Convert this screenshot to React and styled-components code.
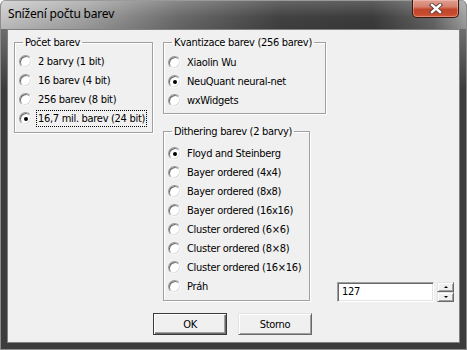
import React from 'react';
import styled, { createGlobalStyle } from 'styled-components';

const Global = createGlobalStyle`
  html, body { margin: 0; padding: 0; background: #ffffff; }
  body { width: 467px; height: 350px; overflow: hidden; }
`;

const uiFont = `"DejaVu Sans Condensed", "DejaVu Sans", sans-serif`;

const Window = styled.div`
  width: 467px;
  height: 350px;
  box-sizing: border-box;
  display: flex;
  flex-direction: column;
  background: #3c3c3c;
  border: 1px solid #8c8c8c;
  border-top: none;
  border-radius: 6px 6px 0 0;
  overflow: hidden;
`;

const TitleBar = styled.div`
  height: 29px;
  flex: none;
  display: flex;
  align-items: flex-start;
  justify-content: space-between;
  background:
    linear-gradient(to bottom, rgba(255,255,255,0.18), rgba(0,0,0,0.05) 60%, rgba(0,0,0,0.12)),
    linear-gradient(to right, #cfcfcf 0%, #a9a9a9 18%, #707070 38%, #454545 60%, #3e3e3e 80%, #6a6a6a 93%, #a8a8a8 100%);
  box-shadow: inset 0 1px 0 #9a9a9a;
`;

const Title = styled.div`
  font-family: "Noto Sans", "Open Sans", sans-serif;
  font-size: 12px;
  color: #000;
  padding: 6px 0 0 7px;
  line-height: 16px;
  letter-spacing: -0.2px;
`;

const CloseButton = styled.div`
  width: 47px;
  height: 18px;
  margin-right: 7px;
  box-sizing: border-box;
  border: 1px solid #3b1610;
  border-top: none;
  border-radius: 0 0 5px 5px;
  background: linear-gradient(to bottom, #dfa092 0%, #d5806c 40%, #c2462c 55%, #c54a2e 80%, #d25b38 100%);
  box-shadow: inset 0 0 0 1px rgba(255, 210, 200, 0.4);
  display: flex;
  align-items: center;
  justify-content: center;
`;

const Body = styled.div`
  flex: 1;
  display: flex;
  padding: 0 6px 6px 6px;
  background: linear-gradient(to bottom, #6e6e6e 0px, #3c3c3c 60px);
`;

const Client = styled.div`
  flex: 1;
  min-width: 0;
  border: 1px solid #808080;
  background: #f0f0f0;
  display: flex;
  flex-direction: column;
  padding: 6px 0 0 6px;
  font-family: ${uiFont};
  font-size: 11px;
  letter-spacing: -0.3px;
  color: #000;
`;

const Columns = styled.div`
  display: flex;
  align-items: flex-start;
`;

const MidColumn = styled.div`
  display: flex;
  flex-direction: column;
  gap: 11px;
  margin-left: 10px;
`;

const Group = styled.fieldset`
  margin: 0;
  box-sizing: border-box;
  width: ${p => p.$w}px;
  height: ${p => p.$h}px;
  padding: ${p => p.$pt}px 0 0 3px;
  border: 1px solid #a0a0a0;
  box-shadow: 1px 1px 0 #ffffff, inset 1px 1px 0 #ffffff;
  display: flex;
  flex-direction: column;
`;

const Legend = styled.legend`
  padding: 0 2px;
  margin-left: 5px;
  line-height: 13px;
  font-size: 11px;
`;

const RadioRow = styled.div`
  height: 19px;
  display: flex;
  align-items: center;
  gap: 5px;
  padding-left: 1px;
  white-space: nowrap;
`;

const RadioCircle = styled.span`
  width: 13px;
  height: 13px;
  flex: none;
  box-sizing: border-box;
  border-radius: 50%;
  border: 1px solid;
  border-color: #9a9a9a #f8f8f8 #f8f8f8 #9a9a9a;
  box-shadow: inset 1px 1px 0 #6a6a6a, inset -1px -1px 0 #dcdcdc;
  background: #ffffff;
  display: flex;
  align-items: center;
  justify-content: center;
  &::after {
    content: '';
    width: 4px;
    height: 4px;
    border-radius: 50%;
    background: ${p => (p.$checked ? '#000' : 'transparent')};
  }
`;

const RadioLabel = styled.span`
  padding: 1px 1px;
  line-height: 13px;
  outline: ${p => (p.$focus ? '1px dotted #000' : 'none')};
  outline-offset: 0;
`;

const SpinColumn = styled.div`
  align-self: flex-end;
  margin-left: 11px;
  display: flex;
  gap: 3px;
  margin-bottom: -1px;
`;

const SpinEdit = styled.div`
  width: 97px;
  height: 20px;
  box-sizing: border-box;
  background: #fff;
  border: 1px solid;
  border-color: #a0a0a0 #ffffff #ffffff #a0a0a0;
  box-shadow: inset 1px 1px 0 #696969, inset -1px -1px 0 #e3e3e3;
  padding: 0 0 0 4px;
  line-height: 18px;
  font-size: 11px;
`;

const SpinButtons = styled.div`
  display: flex;
  flex-direction: column;
`;

const SpinBtn = styled.div`
  width: 17px;
  height: 10px;
  box-sizing: border-box;
  background: #f0f0f0;
  border: 1px solid;
  border-color: #e3e3e3 #696969 #696969 #e3e3e3;
  box-shadow: inset 1px 1px 0 #ffffff, inset -1px -1px 0 #a0a0a0;
  display: flex;
  align-items: center;
  justify-content: center;
  &::after {
    content: '';
    width: 0;
    height: 0;
    border-left: 2px solid transparent;
    border-right: 2px solid transparent;
    ${p => (p.$up ? 'border-bottom: 2px solid #000;' : 'border-top: 2px solid #000;')}
  }
`;

const ButtonRow = styled.div`
  display: flex;
  justify-content: center;
  gap: 11px;
  margin-top: 12px;
  padding-right: 8px;
`;

const Button = styled.div`
  width: 74px;
  height: 22px;
  box-sizing: border-box;
  background: #f0f0f0;
  display: flex;
  align-items: center;
  justify-content: center;
  font-size: 11px;
  ${p =>
    p.$default
      ? `border: 1px solid #3a3a3a;
         box-shadow: inset 1px 1px 0 #ffffff, inset -1px -1px 0 #696969, inset -2px -2px 0 #a0a0a0;`
      : `border: 1px solid;
         border-color: #e3e3e3 #696969 #696969 #e3e3e3;
         box-shadow: inset 1px 1px 0 #ffffff, inset -1px -1px 0 #a0a0a0;`}
`;

const Radio = ({ label, checked, focus }) => (
  <RadioRow>
    <RadioCircle $checked={checked} />
    <RadioLabel $focus={focus}>{label}</RadioLabel>
  </RadioRow>
);

const CloseIcon = () => (
  <svg width="14" height="11" viewBox="0 0 14 11">
    <path d="M3 2 L11 9 M11 2 L3 9" stroke="#5a3a34" strokeWidth="4.2" strokeLinecap="square" />
    <path d="M3 2 L11 9 M11 2 L3 9" stroke="#ffffff" strokeWidth="2.4" strokeLinecap="square" />
  </svg>
);

export default function App() {
  return (
    <>
      <Global />
      <Window>
        <TitleBar>
          <Title>Snížení počtu barev</Title>
          <CloseButton>
            <CloseIcon />
          </CloseButton>
        </TitleBar>
        <Body>
          <Client>
            <Columns>
              <Group $w={139} $h={97} $pt={3}>
                <Legend>Počet barev</Legend>
                <Radio label="2 barvy (1 bit)" />
                <Radio label="16 barev (4 bit)" />
                <Radio label="256 barev (8 bit)" />
                <Radio label="16,7 mil. barev (24 bit)" checked focus />
              </Group>
              <MidColumn>
                <Group $w={163} $h={78} $pt={4}>
                  <Legend>Kvantizace barev (256 barev)</Legend>
                  <Radio label="Xiaolin Wu" />
                  <Radio label="NeuQuant neural-net" checked />
                  <Radio label="wxWidgets" />
                </Group>
                <Group $w={147} $h={176} $pt={6}>
                  <Legend>Dithering barev (2 barvy)</Legend>
                  <Radio label="Floyd and Steinberg" checked />
                  <Radio label="Bayer ordered (4x4)" />
                  <Radio label="Bayer ordered (8x8)" />
                  <Radio label="Bayer ordered (16x16)" />
                  <Radio label="Cluster ordered (6×6)" />
                  <Radio label="Cluster ordered (8×8)" />
                  <Radio label="Cluster ordered (16×16)" />
                  <Radio label="Práh" />
                </Group>
              </MidColumn>
              <SpinColumn>
                <SpinEdit>127</SpinEdit>
                <SpinButtons>
                  <SpinBtn $up />
                  <SpinBtn />
                </SpinButtons>
              </SpinColumn>
            </Columns>
            <ButtonRow>
              <Button $default>OK</Button>
              <Button>Storno</Button>
            </ButtonRow>
          </Client>
        </Body>
      </Window>
    </>
  );
}
